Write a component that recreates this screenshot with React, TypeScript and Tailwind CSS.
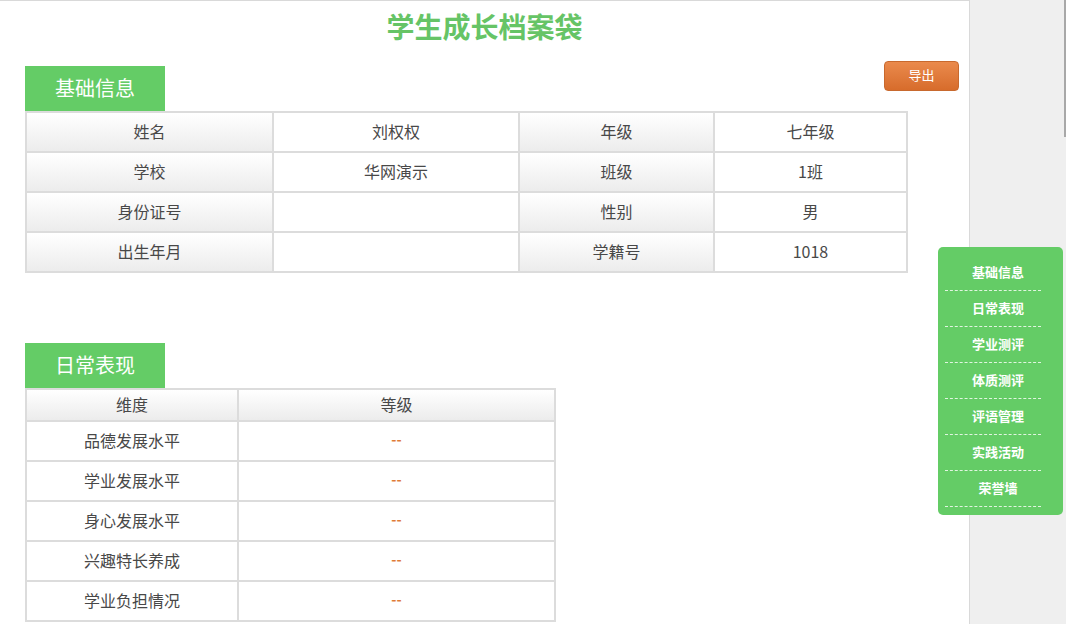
import React from "react";

const FONT = { fontFamily: '"Microsoft YaHei", "Noto Sans CJK SC", "Noto Sans", sans-serif' };

const basicRows: [string, string, string, string][] = [
  ["姓名", "刘权权", "年级", "七年级"],
  ["学校", "华网演示", "班级", "1班"],
  ["身份证号", "", "性别", "男"],
  ["出生年月", "", "学籍号", "1018"],
];

const dailyRows = ["品德发展水平", "学业发展水平", "身心发展水平", "兴趣特长养成", "学业负担情况"];

const navItems = ["基础信息", "日常表现", "学业测评", "体质测评", "评语管理", "实践活动", "荣誉墙"];

function SectionTab({ title }: { title: string }) {
  return (
    <div className="flex h-[45px] w-[140px] items-center bg-[#64cc66] pb-[1px] pl-[30px] text-[20px] text-white">
      {title}
    </div>
  );
}

const labelCell =
  "flex items-center justify-center bg-gradient-to-b from-white to-[#ececec] pb-[3px] text-[16px] text-[#484848]";
const valueCell = "flex items-center justify-center bg-white pb-[3px] text-[16px] text-[#484848]";

export default function App() {
  return (
    <div className="relative flex h-[624px] w-[1066px] overflow-hidden bg-[#efefef]" style={FONT}>
      {/* main page */}
      <div className="h-full w-[970px] border-t border-r border-[#d9d9d9] bg-white">
        <h1 className="pt-[5px] text-center text-[28px] font-bold leading-[40px] text-[#66c466]">
          学生成长档案袋
        </h1>

        <div className="pl-[25px] pr-[10px]">
          <div className="flex items-start justify-between">
            <div className="mt-[20px]">
              <SectionTab title="基础信息" />
            </div>
            <button className="mt-[15px] h-[30px] w-[75px] rounded-[4px] border border-[#c8692e] bg-gradient-to-b from-[#ea8a4c] to-[#d76c2b] pb-[2px] text-[13px] text-white">
              导出
            </button>
          </div>

          <div className="grid w-[883px] grid-cols-[245px_244px_193px_1fr] gap-[2px] bg-[#dcdcdc] p-[2px]">
            {basicRows.map((r, i) => (
              <React.Fragment key={i}>
                <div className={`${labelCell} h-[38px]`}>{r[0]}</div>
                <div className={`${valueCell} h-[38px]`}>{r[1]}</div>
                <div className={`${labelCell} h-[38px]`}>{r[2]}</div>
                <div className={`${valueCell} h-[38px]`}>{r[3]}</div>
              </React.Fragment>
            ))}
          </div>

          <div className="mt-[70px]">
            <SectionTab title="日常表现" />
          </div>

          <div className="grid w-[531px] grid-cols-[210px_1fr] gap-[2px] bg-[#dcdcdc] p-[2px]">
            <div className={`${labelCell} h-[30px]`}>维度</div>
            <div className={`${labelCell} h-[30px]`}>等级</div>
            {dailyRows.map((r) => (
              <React.Fragment key={r}>
                <div className={`${valueCell} h-[38px]`}>{r}</div>
                <div className="flex h-[38px] items-center justify-center bg-white pb-[3px] text-[14px] font-bold text-[#e07b36]">
                  --
                </div>
              </React.Fragment>
            ))}
          </div>
        </div>
      </div>

      <div className="flex-1" />

      {/* scrollbar thumb */}
      <div className="absolute right-0 top-0 h-[137px] w-[2px] bg-[#a8a8a8]" />

      {/* floating side nav */}
      <div className="absolute left-[938px] top-[247px] w-[125px] rounded-[5px] bg-[#64cc66] py-[8px]">
        {navItems.map((n) => (
          <div
            key={n}
            className="ml-[7px] flex h-[36px] w-[96px] items-center justify-center border-b border-dashed border-white/80 pb-[2px] pl-[10px] text-[13px] font-semibold text-white"
          >
            {n}
          </div>
        ))}
      </div>
    </div>
  );
}
